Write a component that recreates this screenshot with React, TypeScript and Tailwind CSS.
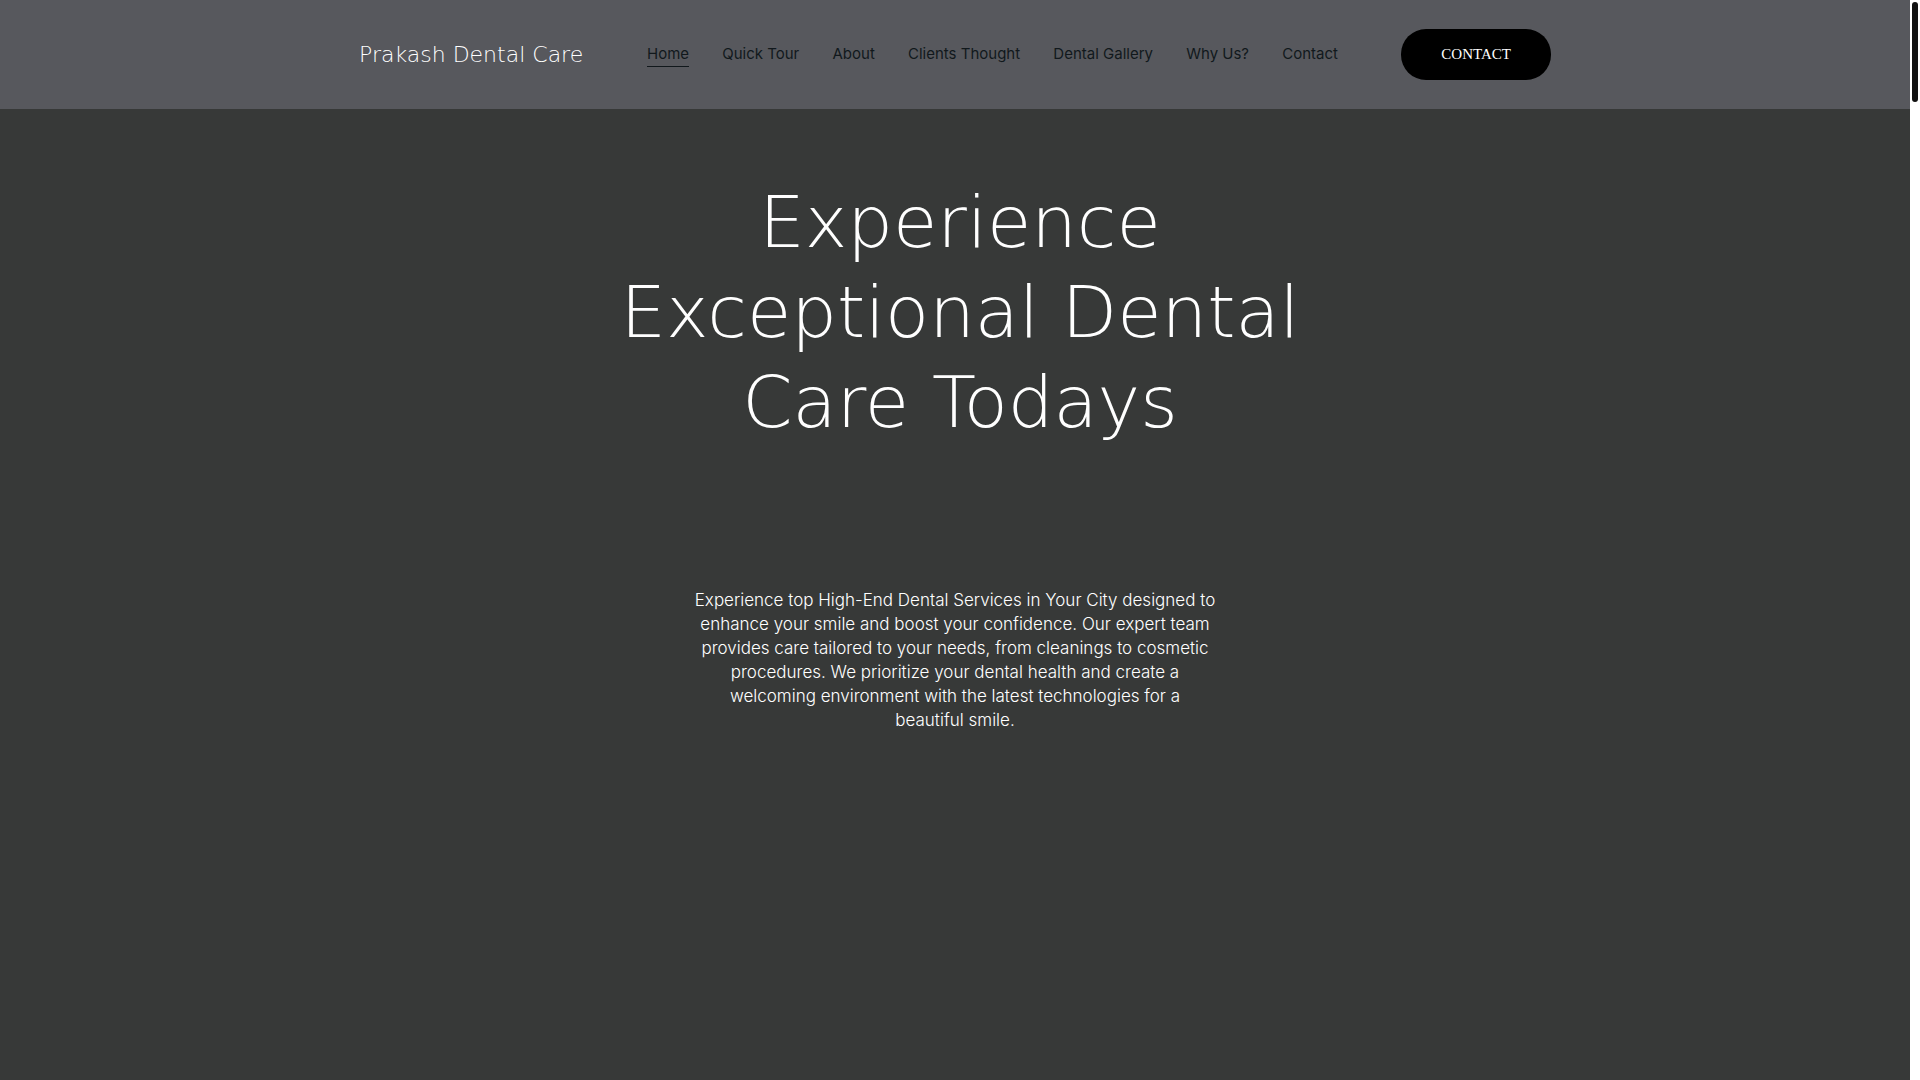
import React from "react"

const navLinks = [
  { label: "Home", href: "#home", active: true },
  { label: "Quick Tour", href: "#tour" },
  { label: "About", href: "#about" },
  { label: "Clients Thought", href: "#clients" },
  { label: "Dental Gallery", href: "#gallery" },
  { label: "Why Us?", href: "#why-us" },
  { label: "Contact", href: "#contact" },
]

function Header() {
  return (
    <header className="bg-[#57585d]">
      <div className="mx-auto flex h-[109px] max-w-[1192px] items-center">
        <a
          href="#home"
          className="w-[288px] shrink-0 whitespace-nowrap font-['DejaVu_Sans',sans-serif] text-[22px] leading-6 font-extralight text-white"
        >
          Prakash Dental Care
        </a>
        <nav className="flex w-[691px] justify-between font-['Inter',sans-serif] text-[15px] leading-6 text-[#11181c]">
          {navLinks.map((link) => (
            <a
              key={link.label}
              href={link.href}
              className={link.active ? "whitespace-nowrap border-b border-[#11181c]" : "whitespace-nowrap border-b border-transparent"}
            >
              {link.label}
            </a>
          ))}
        </nav>
        <button
          type="button"
          className="ml-auto rounded-[25px] bg-black px-10 py-[14px] font-['Liberation_Serif',serif] text-[15px] leading-[23px] text-white"
        >
          CONTACT
        </button>
      </div>
    </header>
  )
}

export default function App() {
  return (
    <div className="flex min-h-screen bg-[#373938]">
      <div className="min-w-0 flex-1">
        <Header />

        {/* Hero Section */}
        <main className="px-4 pt-[68px] text-center text-white">
          <h1 className="mx-auto max-w-[800px] pl-[10px] font-['DejaVu_Sans',sans-serif] text-[72px] leading-[90px] font-extralight">
            Experience
            <br />
            Exceptional Dental
            <br />
            Care Todays
          </h1>
          <p className="mx-auto mt-[141px] max-w-[532px] font-['Inter',sans-serif] text-[17px] leading-6 font-light">
            Experience top High-End Dental Services in Your City designed to enhance your smile and boost your
            confidence. Our expert team provides care tailored to your needs, from cleanings to cosmetic procedures. We
            prioritize your dental health and create a welcoming environment with the latest technologies for a
            <br />
            beautiful smile.
          </p>
        </main>
      </div>

      {/* Scroll track */}
      <div className="w-[10px] shrink-0 bg-white p-0.5">
        <div className="h-[100px] rounded-full bg-[#111111]" />
      </div>
    </div>
  )
}
